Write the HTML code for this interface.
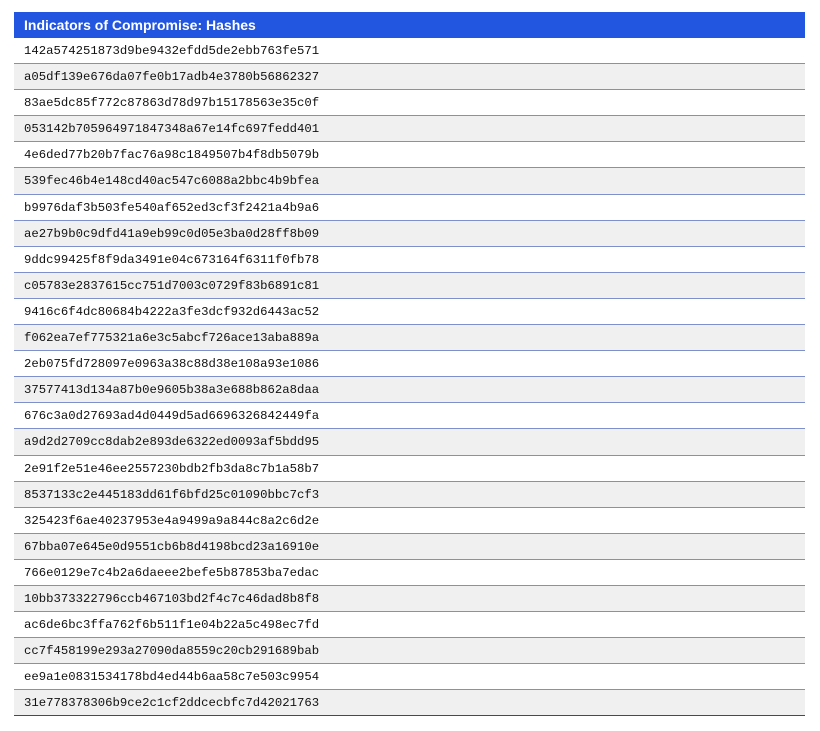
<!DOCTYPE html>
<html><head><style>
body{margin:0;background:#fff;width:820px;height:731px;overflow:hidden}
.t{position:absolute;left:14px;top:12px;width:791px}
.h{background:#2356e0;color:#fff;font:bold 14px "Liberation Sans",Arial,sans-serif;height:26px;line-height:27px;padding-left:10px;box-sizing:border-box}
.r{height:26.1px;box-sizing:border-box;border-bottom:1px solid #7f8fcc;font:12.3px "Liberation Mono",monospace;color:#111;line-height:26px;padding-left:10px}
.r:nth-child(odd){background:#f0f0f0}
.r:last-child{border-bottom:1px solid #34469a}
</style></head><body><div class="t"><div class="h">Indicators of Compromise: Hashes</div>
<div class="r">142a574251873d9be9432efdd5de2ebb763fe571</div>
<div class="r">a05df139e676da07fe0b17adb4e3780b56862327</div>
<div class="r">83ae5dc85f772c87863d78d97b15178563e35c0f</div>
<div class="r">053142b705964971847348a67e14fc697fedd401</div>
<div class="r">4e6ded77b20b7fac76a98c1849507b4f8db5079b</div>
<div class="r">539fec46b4e148cd40ac547c6088a2bbc4b9bfea</div>
<div class="r">b9976daf3b503fe540af652ed3cf3f2421a4b9a6</div>
<div class="r">ae27b9b0c9dfd41a9eb99c0d05e3ba0d28ff8b09</div>
<div class="r">9ddc99425f8f9da3491e04c673164f6311f0fb78</div>
<div class="r">c05783e2837615cc751d7003c0729f83b6891c81</div>
<div class="r">9416c6f4dc80684b4222a3fe3dcf932d6443ac52</div>
<div class="r">f062ea7ef775321a6e3c5abcf726ace13aba889a</div>
<div class="r">2eb075fd728097e0963a38c88d38e108a93e1086</div>
<div class="r">37577413d134a87b0e9605b38a3e688b862a8daa</div>
<div class="r">676c3a0d27693ad4d0449d5ad6696326842449fa</div>
<div class="r">a9d2d2709cc8dab2e893de6322ed0093af5bdd95</div>
<div class="r">2e91f2e51e46ee2557230bdb2fb3da8c7b1a58b7</div>
<div class="r">8537133c2e445183dd61f6bfd25c01090bbc7cf3</div>
<div class="r">325423f6ae40237953e4a9499a9a844c8a2c6d2e</div>
<div class="r">67bba07e645e0d9551cb6b8d4198bcd23a16910e</div>
<div class="r">766e0129e7c4b2a6daeee2befe5b87853ba7edac</div>
<div class="r">10bb373322796ccb467103bd2f4c7c46dad8b8f8</div>
<div class="r">ac6de6bc3ffa762f6b511f1e04b22a5c498ec7fd</div>
<div class="r">cc7f458199e293a27090da8559c20cb291689bab</div>
<div class="r">ee9a1e0831534178bd4ed44b6aa58c7e503c9954</div>
<div class="r">31e778378306b9ce2c1cf2ddcecbfc7d42021763</div>
</div></body></html>
